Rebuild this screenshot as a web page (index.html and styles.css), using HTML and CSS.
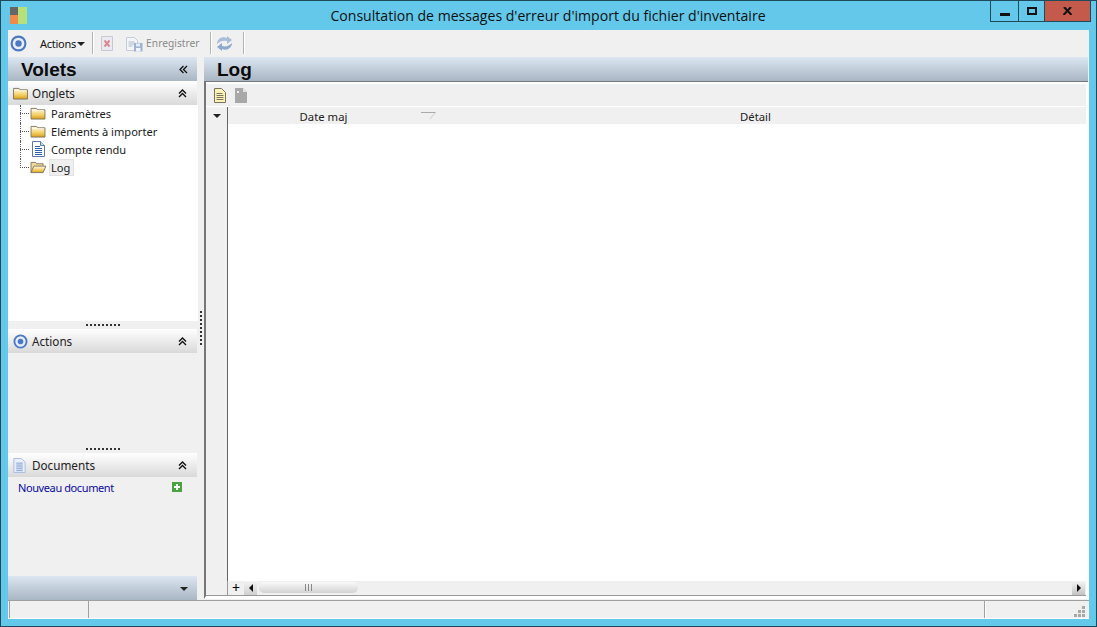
FILE: index.html
```html
<!DOCTYPE html>
<html lang="fr">
<head>
<meta charset="utf-8">
<title>Consultation</title>
<link rel="stylesheet" href="styles.css">
</head>
<body>
<svg class="defs" width="0" height="0">
  <defs>
    <linearGradient id="fold" x1="0" y1="0" x2="0" y2="1"><stop offset="0" stop-color="#fffbe0"/><stop offset=".6" stop-color="#f3cf66"/><stop offset="1" stop-color="#d99f18"/></linearGradient>
    <symbol id="folder" viewBox="0 0 16 14"><path d="M.5 3V1.500h6l1 1.500h8v10H.5z" fill="url(#fold)" stroke="#7d7460"/><path d="M1.500 4h13" stroke="#fff" stroke-opacity=".8"/></symbol>
    <symbol id="folder-open" viewBox="0 0 18 14"><path d="M1.500 12.500V1.500h5l1 1.500h7v2" fill="#f3dc95" stroke="#7d7460"/><path d="M1.500 12.500l3-7h13l-3 7z" fill="url(#fold)" stroke="#7d7460"/></symbol>
    <symbol id="doc" viewBox="0 0 13 16"><path d="M.5.5h8l4 4v11H.5z" fill="#fff" stroke="#5a78a8"/><path d="M8.500.5v4h4" fill="#cfdcf0" stroke="#5a78a8"/><path d="M3 5.500h5M3 7.500h7M3 9.500h7M3 11.500h7M3 13.500h7" stroke="#2f5fb0"/></symbol>
    <symbol id="target" viewBox="0 0 16 16"><circle cx="8" cy="8" r="6.500" fill="#e8eef8" stroke="#4c78c4" stroke-width="2"/><circle cx="8" cy="8" r="3" fill="#4c78c4"/></symbol>
    <symbol id="chev-up" viewBox="0 0 9 9"><path d="M1 4.500L4.500 1 8 4.500M1 8l3.500-3.500L8 8" fill="none" stroke="#111" stroke-width="1.400"/></symbol>
  </defs>
</svg>
<div class="window">
  <header class="titlebar">
    <svg class="app-logo" width="17" height="17" viewBox="0 0 17 17"><rect width="8" height="8" fill="#666"/><rect y="8" width="8" height="9" fill="#f08a4b"/><rect x="8" width="9" height="17" fill="#b5e07a"/></svg>
    <h1 class="title">Consultation de messages d'erreur d'import du fichier d'inventaire</h1>
    <div class="winbtns">
      <div class="winbtn min"><span class="min-glyph"></span></div>
      <div class="winbtn max"><span class="max-glyph"></span></div>
      <div class="winbtn close"><svg width="9" height="8" viewBox="0 0 9 8"><path d="M1 0l7.500 8M8 0L.5 8" stroke="#111" stroke-width="2"/></svg></div>
    </div>
  </header>

  <div class="client">
    <div class="toolbar">
      <svg class="tb-target" width="17" height="17"><use href="#target"/></svg>
      <span class="tb-actions">Actions</span><span class="caret"></span>
      <span class="tb-sep"></span>
      <svg class="tb-del" width="14" height="15" viewBox="0 0 14 15"><path d="M1.500.5h11v14h-11z" fill="#eceaf0" stroke="#c8c8d0"/><path d="M4.500 4.500l5 6M9.500 4.500l-5 6" stroke="#d88a92" stroke-width="2"/></svg>
      <svg class="tb-save" width="17" height="17" viewBox="0 0 17 17"><path d="M.5 2.500h8l3 3v10H.5z" fill="#f2f4f8" stroke="#c4ccd8"/><path d="M2.500 7h6M2.500 9h6M2.500 11h4" stroke="#aebcd0"/><rect x="8" y="8" width="8.500" height="8.500" fill="#9fb2d2"/><rect x="10" y="8.500" width="4" height="3" fill="#e6ecf5"/><rect x="10" y="13" width="4.500" height="3.500" fill="#f2f4f8"/></svg>
      <span class="tb-label">Enregistrer</span>
      <span class="tb-sep sep2"></span>
      <svg class="tb-refresh" width="17" height="17" viewBox="0 0 17 17"><path d="M1 9c0-5 5-8 10-6V1l5 4-5 4V6C7 5 4 6 1 9z" fill="#a9bcd8"/><path d="M16 8c0 5-5 8-10 6v2l-5-4 5-4v3c4 1 7 0 10-3z" fill="#8fa8cc"/></svg>
      <span class="tb-sep sep3"></span>
    </div>

    <div class="main">
      <aside class="left">
        <div class="volets-head band"><span class="band-title">Volets</span><svg class="dbl-left" width="9" height="9" viewBox="0 0 9 9"><path d="M4.500 1L1 4.500 4.500 8M8 1L4.500 4.500 8 8" fill="none" stroke="#111" stroke-width="1.300"/></svg></div>

        <div class="sec-head onglets">
          <svg class="sec-icon" width="15" height="13"><use href="#folder"/></svg><span>Onglets</span>
          <svg class="chev" width="9" height="9"><use href="#chev-up"/></svg>
        </div>
        <div class="tree">
          <div class="tree-row"><svg class="ti" width="17" height="13"><use href="#folder"/></svg><span class="tl">Paramètres</span></div>
          <div class="tree-row"><svg class="ti" width="17" height="13"><use href="#folder"/></svg><span class="tl">Eléments à importer</span></div>
          <div class="tree-row"><svg class="ti doc" width="13" height="16"><use href="#doc"/></svg><span class="tl">Compte rendu</span></div>
          <div class="tree-row last"><svg class="ti" width="18" height="13"><use href="#folder-open"/></svg><span class="tl sel">Log</span></div>
        </div>

        <div class="grip"></div>
        <div class="sec-head">
          <svg class="sec-icon" width="15" height="15"><use href="#target"/></svg><span>Actions</span>
          <svg class="chev" width="9" height="9"><use href="#chev-up"/></svg>
        </div>
        <div class="sec-body actions-body"></div>

        <div class="grip"></div>
        <div class="sec-head">
          <svg class="sec-icon" width="13" height="15" viewBox="0 0 13 16"><path d="M.5.5h8l4 4v11H.5z" fill="#e8eefa" stroke="#a9bcdc"/><path d="M3 5.500h7M3 7.500h7M3 9.500h7M3 11.500h7M3 13.500h7" stroke="#7f9ed2"/></svg><span class="docs-title">Documents</span>
          <svg class="chev" width="9" height="9"><use href="#chev-up"/></svg>
        </div>
        <div class="sec-body docs-body">
          <span class="link">Nouveau document</span>
          <svg class="plus" width="10" height="10" viewBox="0 0 10 10"><rect width="10" height="10" fill="#4aa340"/><path d="M5 2v6M2 5h6" stroke="#fff" stroke-width="2"/></svg>
        </div>
        <div class="left-foot band"><span class="caret dark"></span></div>
      </aside>

      <div class="splitter"><span class="split-dots"></span></div>

      <section class="right">
        <div class="log-head band"><span class="band-title">Log</span></div>
        <div class="panel">
          <div class="grid-tools">
            <svg width="12" height="15" viewBox="0 0 12 15"><path d="M.5.5h7l4 4v10H.5z" fill="#fdf3b8" stroke="#77735f"/><path d="M2.500 5.500h6M2.500 7.500h7M2.500 9.500h7M2.500 11.500h7" stroke="#77735f"/></svg>
            <svg class="tool-off" width="12" height="15" viewBox="0 0 12 15"><path d="M0 0h8l4 4v11H0z" fill="#a8a8a8"/><path d="M8 0v4h4" fill="#e4e4e4"/><path d="M2 3l2 2M4 3L2 5" stroke="#eee"/></svg>
          </div>
          <div class="grid-head">
            <div class="row-corner"><span class="caret dark"></span></div>
            <div class="col col-date">Date maj<svg class="sort" width="15" height="7" viewBox="0 0 15 7"><path d="M0 .5h14.500" stroke="#aaa"/><path d="M14.500.5L9 7" stroke="#ccc"/></svg></div>
            <div class="col col-detail">Détail</div>
          </div>
          <div class="grid-body">
            <div class="row-gutter"></div>
            <div class="rows"></div>
          </div>
          <div class="grid-foot">
            <div class="foot-gutter"></div>
            <div class="foot-plus">+</div>
            <div class="arrow-btn"><span class="tri-left"></span></div>
            <div class="hscroll"><div class="thumb"><span class="thumb-grip"></span></div></div>
            <div class="arrow-btn right-btn"><span class="tri-right"></span></div>
          </div>
        </div>
      </section>
    </div>

    <footer class="status">
      <div class="st st1"></div>
      <div class="st st2"></div>
      <div class="st st3"><svg class="resize" width="11" height="11" viewBox="0 0 11 11"><path d="M8 0h3v3H8zM4 4h3v3H4zM8 4h3v3H8zM0 8h3v3H0zM4 8h3v3H4zM8 8h3v3H8z" fill="#a8a8a8"/></svg></div>
    </footer>
  </div>
</div>
</body>
</html>
```
FILE: styles.css
```css
* { box-sizing: border-box; }
html, body { margin: 0; padding: 0; }
body { width: 1097px; height: 627px; overflow: hidden; font-family: "Noto Sans", sans-serif; font-size: 11.1px; color: #1a1a1a; }
.defs { display: block; height: 0; }

.window { width: 1097px; height: 627px; background: #63c8ea; border: 1px solid #1f4a5c; display: flex; flex-direction: column; }
.titlebar { height: 29px; flex: none; display: flex; align-items: flex-start; }
.app-logo { margin: 6px 0 0 9px; }
.title { margin: 0 0 0 79px; flex: 1; text-align: center; font-family: "Open Sans", sans-serif; font-size: 14.08px; font-weight: 400; line-height: 29px; color: #111; }
.winbtns { display: flex; margin-right: 5px; height: 21px; border: 1px solid #1f4a5c; border-top: 0; }
.winbtn { display: flex; align-items: center; justify-content: center; border-left: 1px solid #1f4a5c; }
.winbtn.min { width: 27px; border-left: 0; align-items: flex-end; padding-bottom: 5px; }
.winbtn.max { width: 26px; }
.winbtn.close { width: 46px; background: #c35a4c; }
.min-glyph { width: 10px; height: 3px; background: #111; }
.max-glyph { width: 10px; height: 8px; border: 2px solid #111; }

.client { flex: 1; margin: 0 7px 7px 7px; display: flex; flex-direction: column; min-height: 0; background: #f0f0f0; }
.toolbar { height: 26px; flex: none; display: flex; align-items: center; padding-left: 2px; color: #111; }
.tb-actions { margin-left: 13px; font-size: 11px; letter-spacing: -0.25px; }
.caret { display: inline-block; width: 0; height: 0; border-left: 4px solid transparent; border-right: 4px solid transparent; border-top: 4px solid #222; }
.toolbar .caret { margin-left: 1px; margin-top: 2px; }
.tb-sep { width: 1px; height: 22px; background: #b4b4b4; margin-left: 7px; box-shadow: 1px 0 0 #fff; }
.tb-del { margin-left: 7px; }
.tb-save { margin-left: 12px; }
.tb-label { color: #8a8a8a; margin-left: 3px; font-size: 10.25px; }
.sep2 { margin-left: 10px; }
.tb-refresh { margin-left: 5px; }
.sep3 { margin-left: 10px; }

.main { flex: 1; min-height: 0; display: flex; }
.left { width: 189px; flex: none; display: flex; flex-direction: column; }
.band { background: linear-gradient(#dbe6f1, #a9b6c3); }
.band-title { font-family: "Liberation Sans", sans-serif; font-weight: 700; font-size: 19px; color: #0c0c0c; }
.volets-head { height: 24px; flex: none; margin-top: 1px; display: flex; align-items: center; justify-content: space-between; padding: 1px 9px 0 13px; }
.sec-head { height: 24px; flex: none; display: flex; align-items: center; background: linear-gradient(#ffffff, #d9d9d9); padding-left: 5px; font-size: 11.7px; color: #222; }
.sec-icon { flex: none; margin-right: 4px; }
.docs-title { margin-left: 2px; }
.chev { margin-left: auto; margin-right: 10px; }
.tree { height: 216px; flex: none; background: #fff; margin-right: -1px; }
.tree-row { height: 18px; display: flex; align-items: center; position: relative; padding: 0 0 2px 21px; }
.tree-row::before { content: ""; position: absolute; left: 12px; top: 8px; width: 9px; border-top: 1px dotted #555; }
.tree-row::after { content: ""; position: absolute; left: 12px; top: 0; height: 18px; border-left: 1px dotted #555; }
.tree-row.last::after { height: 9px; }
.ti { flex: none; width: 18px; }
.ti.doc { margin-left: 3px; width: 13px; margin-right: 2px; }
.tl { margin-left: 3px; padding: 0 1px; line-height: 17px; font-size: 11.1px; }
.tl.sel { background: #efefef; border: 1px solid #e2e2e2; margin-left: 2px; padding: 0 3px 0 1px; line-height: 15px; }
.grip { height: 8px; flex: none; display: flex; justify-content: center; align-items: flex-start; padding-top: 3px; background: #f0f0f0; }
.grip::before { content: ""; width: 34px; height: 2px; background: repeating-linear-gradient(90deg, #333 0 2px, transparent 2px 4px); margin-left: 1px; }
.sec-body { flex: none; background: #f0f0f0; }
.actions-body { height: 92px; }
.docs-body { height: 99px; padding: 3px 15px 0 10px; display: flex; justify-content: space-between; align-items: flex-start; }
.link { color: #0a0aa0; font-size: 11px; letter-spacing: -0.4px; line-height: 16px; }
.plus { margin: 2px 0 0; }
.left-foot { height: 24px; flex: none; display: flex; align-items: center; justify-content: flex-end; padding: 2px 9px 0 0; }

.splitter { width: 7px; flex: none; position: relative; }
.split-dots { position: absolute; left: 3px; top: 255px; width: 2px; height: 36px; background: repeating-linear-gradient(#333 0 2px, transparent 2px 4px); }
.right { flex: 1; min-width: 0; display: flex; flex-direction: column; }
.log-head { height: 25px; flex: none; margin-top: 1px; padding: 1px 0 0 13px; display: flex; align-items: center; border-bottom: 1px solid #777; margin-right: 1px; }
.panel { flex: 1; min-height: 0; display: flex; flex-direction: column; background: #fff; border-left: 2px solid #777; border-bottom: 3px solid #fff; padding-top: 2px; border-right: 3px solid #fff; margin-bottom: 1px; }
.grid-tools { height: 22px; flex: none; background: #f0f0f0; display: flex; align-items: center; gap: 9px; padding-left: 8px; }
.grid-head { height: 18px; flex: none; display: flex; background: #f0f0f0; align-items: center; border-top: 1px solid #fff; font-size: 11.3px; color: #222; }
.row-corner { width: 22px; flex: none; display: flex; justify-content: center; align-self: stretch; align-items: center; border-right: 1px solid #666; padding-top: 1px; }
.col { position: relative; display: flex; align-items: center; padding-top: 2px; }
.col-date { width: 204px; flex: none; justify-content: center; padding-right: 13px; align-self: stretch; }
.sort { position: absolute; right: -4px; top: 5px; }
.col-detail { flex: 1; justify-content: center; padding-right: 7px; }
.grid-body { flex: 1; min-height: 0; display: flex; }
.row-gutter { width: 22px; flex: none; background: #f0f0f0; border-right: 1px solid #666; }
.rows { flex: 1; background: #fff; }
.grid-foot { height: 15px; flex: none; display: flex; align-items: stretch; background: #f0f0f0; border-bottom: 1px solid #999; }
.foot-gutter { width: 22px; flex: none; border-right: 1px solid #999; }
.foot-plus { width: 16px; flex: none; text-align: center; font-size: 14px; line-height: 14px; color: #000; }
.arrow-btn { width: 13px; flex: none; display: flex; align-items: center; justify-content: center; background: linear-gradient(#f4f4f4, #cfcfcf); }
.right-btn { background: linear-gradient(#f4f4f4, #c4c4c4); margin-right: 1px; }
.tri-left { border: 4px solid transparent; border-left: 0; border-right: 4px solid #111; }
.tri-right { border: 4px solid transparent; border-right: 0; border-left: 4px solid #111; }
.hscroll { flex: 1; padding: 1px 0 2px 2px; }
.thumb { width: 99px; height: 100%; border-radius: 5px; background: linear-gradient(#fafafa, #d2d2d2); display: flex; justify-content: center; align-items: center; }
.thumb-grip { width: 7px; height: 7px; background: repeating-linear-gradient(90deg, #888 0 1px, transparent 1px 3px); }

.status { height: 19px; flex: none; display: flex; border-top: 1px solid #a0a0a0; border-bottom: 1px solid #fff; }
.st { height: 100%; border-left: 1px solid #a0a0a0; }
.st1 { width: 79px; margin-left: 1px; }
.st2 { flex: 1; }
.st3 { width: 105px; position: relative; box-shadow: inset 1px 0 0 #fff; }
.resize { position: absolute; right: 4px; bottom: 1px; }
```
